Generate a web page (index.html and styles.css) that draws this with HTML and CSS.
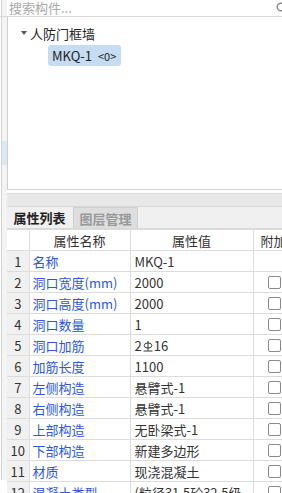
FILE: index.html
```html
<!DOCTYPE html>
<html lang="zh-CN">
<head>
  <meta charset="UTF-8" />
  <title>构件属性</title>
  <link rel="stylesheet" href="styles.css">
</head>
<body>
  <div id="app">
    <div id="side">
      <div class="side-sel"></div>
    </div>

    <div id="main">
      <div id="search">
        <span class="placeholder">搜索构件...</span>
        <svg class="search-icon" width="12" height="12" viewBox="0 0 12 12">
          <circle cx="5" cy="5" r="3.8" fill="none" stroke="#888" stroke-width="1.4" />
          <line x1="8" y1="8" x2="11" y2="11" stroke="#888" stroke-width="1.4" />
        </svg>
      </div>

      <div id="tree">
        <div class="node">
          <span class="caret"></span>
          <span>人防门框墙</span>
        </div>
        <div class="leaf selected">MKQ-1 <small>&lt;0&gt;</small></div>
      </div>

      <div id="props">
        <div class="band"></div>
        <div class="tabs">
          <button class="tab active">属性列表</button>
          <button class="tab">图层管理</button>
        </div>
        <table id="prop-table">
          <colgroup>
            <col class="c-num"><col class="c-name"><col class="c-val"><col class="c-add">
          </colgroup>
          <thead>
            <tr><th></th><th>属性名称</th><th>属性值</th><th class="add">附加</th></tr>
          </thead>
          <tbody id="rows"></tbody>
        </table>
      </div>
    </div>
  </div>

  <script>
    // steel grade mark (HRB400) drawn as a small svg
    const bar = '<svg class="bar" width="10" height="11" viewBox="0 0 10 11">' +
      '<ellipse cx="5" cy="4.5" rx="3.8" ry="2.6" fill="none" stroke="#333" stroke-width="1"/>' +
      '<line x1="5" y1="0" x2="5" y2="9.5" stroke="#333" stroke-width="1"/>' +
      '<line x1="0.5" y1="10" x2="9.5" y2="10" stroke="#333" stroke-width="1"/></svg>';

    const props = [
      ["名称", "MKQ-1", false],
      ["洞口宽度(mm)", "2000", true],
      ["洞口高度(mm)", "2000", true],
      ["洞口数量", "1", true],
      ["洞口加筋", "2" + bar + "16", true],
      ["加筋长度", "1100", true],
      ["左侧构造", "悬臂式-1", true],
      ["右侧构造", "悬臂式-1", true],
      ["上部构造", "无卧梁式-1", true],
      ["下部构造", "新建多边形", true],
      ["材质", "现浇混凝土", true],
      ["混凝土类型", "(粒径31.5砼32.5级", true]
    ];

    const rows = document.getElementById("rows");
    props.forEach((p, i) => {
      const tr = document.createElement("tr");
      tr.innerHTML =
        `<td class="num">${i + 1}</td>` +
        `<td class="name">${p[0]}</td>` +
        `<td class="val">${p[1]}</td>` +
        `<td class="chk">${p[2] ? '<span class="box"></span>' : ''}</td>`;
      rows.appendChild(tr);
    });
  </script>
</body>
</html>
```

FILE: styles.css
```css
* {
  margin: 0;
  padding: 0;
  box-sizing: border-box;
}

body, html {
  width: 282px;
  height: 493px;
  overflow: hidden;
  background: #fff;
  font-family: "Noto Sans CJK SC", "Microsoft YaHei", sans-serif;
  font-size: 13px;
  color: #333;
}

#app {
  display: flex;
  height: 100%;
}

#side {
  width: 6px;
  flex: none;
  height: 480px;
  margin-left: 1px;
  border-left: 1px solid #d4d4d4;
  background: #f4f4f4;
  padding-top: 141px;
}

.side-sel {
  height: 24px;
  background: #dbe8f6;
}

#main {
  flex: 1;
  min-width: 0;
  display: flex;
  flex-direction: column;
}

#search {
  height: 17px;
  margin-left: -7px;
  padding-left: 9px;
  border-bottom: 1px solid #d8d8d8;
  display: flex;
  align-items: center;
  position: relative;
}

.placeholder {
  color: #a8a8a8;
  line-height: 16px;
}

.search-icon {
  position: absolute;
  right: -6px;
  top: 2px;
}

#tree {
  height: 173px;
  border-left: 1px solid #cfcfcf;
  border-bottom: 1px solid #d4d4d4;
  padding-top: 6px;
}

.node {
  display: flex;
  align-items: center;
  height: 20px;
  padding-left: 13px;
  color: #222;
}

.caret {
  width: 0;
  height: 0;
  border-left: 3.5px solid transparent;
  border-right: 3.5px solid transparent;
  border-top: 4px solid #555;
  margin-right: 3px;
}

.leaf {
  display: inline-block;
  margin: 2px 0 0 40px;
  padding: 0 5px 0 4px;
  height: 21px;
  line-height: 21px;
  border-radius: 3px;
  color: #222;
}

.leaf small {
  font-size: 11px;
  margin-left: 3px;
}

.selected {
  background: #c5dcf2;
}

#props {
  margin-top: 3px;
  flex: 1;
  overflow: hidden;
}

.band {
  height: 13px;
  background: #e8e8e8;
  border-top: 1px solid #dadada;
}

.tabs {
  display: flex;
  height: 23px;
  background: #f0f0f0;
  border-top: 1px solid #d8d8d8;
  border-bottom: 1px solid #d8d8d8;
}

.tab {
  width: 65px;
  border: none;
  background: #f0f0f0;
  font-family: inherit;
  font-size: 13px;
  color: #222;
  font-weight: bold;
}

.tab:not(.active) {
  margin-left: 1px;
  background: #dedede;
  border: 1px solid #d0d0d0;
  border-bottom: none;
  color: #999;
}

#prop-table {
  width: 300px;
  border-collapse: collapse;
  table-layout: fixed;
}

.c-num { width: 22px; }
.c-name { width: 101px; }
.c-val { width: 123px; }
.c-add { width: 54px; }

th, td {
  height: 21px;
  border: 1px solid #dcdcdc;
  white-space: nowrap;
  overflow: hidden;
  line-height: 19px;
}

tr > :first-child {
  border-left: none;
}

th {
  font-weight: normal;
  color: #333;
  text-align: center;
}

th.add {
  text-align: left;
  padding-left: 7px;
}

td.num {
  background: #f0f0f0;
  text-align: center;
  color: #333;
}

td.name {
  color: #2b58dc;
  padding-left: 3px;
}

td.val {
  padding-left: 4px;
  color: #333;
}

.bar {
  margin: 0 1px;
  vertical-align: -1px;
}

td.chk {
  padding-left: 14px;
}

.box {
  display: inline-block;
  width: 13px;
  height: 13px;
  border: 1px solid #8a8a8a;
  border-radius: 2px;
  background: #fff;
  vertical-align: middle;
  margin-top: -2px;
}
```
